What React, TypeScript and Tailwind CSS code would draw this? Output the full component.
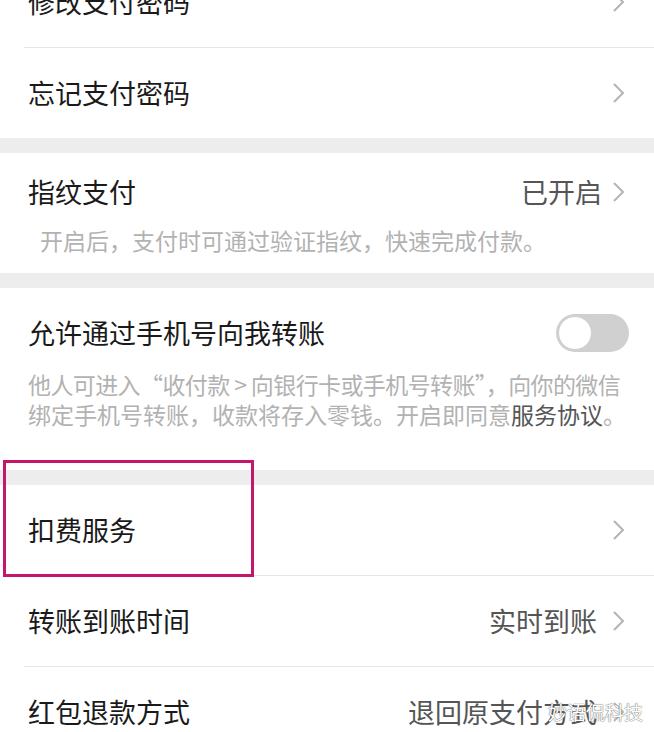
import * as React from 'react';

const font = "font-['Noto_Sans_CJK_SC','Noto_Sans',sans-serif]";

const Chevron: React.FC = () => (
  <svg width="13" height="22" viewBox="0 0 13 22" className="shrink-0">
    <polyline points="2,2 11,11 2,20" fill="none" stroke="#b4b4b4" strokeWidth="2" />
  </svg>
);

type RowProps = { title: string; value?: string; divider?: boolean; className?: string };

const Row: React.FC<RowProps> = ({ title, value, divider, className = '' }) => (
  <div className={`bg-white ${className}`}>
    <div className="flex h-[90px] items-center pl-[28px] pr-[29px]">
      <span className="flex-1 text-[27px] text-[#1a1a1a]">{title}</span>
      {value && <span className="mr-[15px] text-[27px] text-[#555]">{value}</span>}
      <Chevron />
    </div>
    {divider && <div className="ml-[24px] h-px bg-[#e6e6e6]" />}
  </div>
);

const Gap: React.FC = () => <div className="h-[15px] bg-[#ededed]" />;

export default function App() {
  return (
    <div className={`relative h-[732px] w-[654px] overflow-hidden bg-white ${font}`}>
      <Row title="修改支付密码" divider className="mt-[-43px]" />
      <Row title="忘记支付密码" />
      <Gap />

      {/* fingerprint */}
      <div className="bg-white pt-[21px] pb-[18px] pl-[28px] pr-[29px]">
        <div className="flex h-[36px] items-center">
          <span className="flex-1 text-[27px] text-[#1a1a1a]">指纹支付</span>
          <span className="mr-[10px] text-[27px] text-[#555]">已开启</span>
          <Chevron />
        </div>
        <p className="mt-[15px] pl-[12px] text-[23px] leading-[30px] text-[#b2b2b2]">
          开启后，支付时可通过验证指纹，快速完成付款。
        </p>
      </div>
      <Gap />

      {/* phone transfer */}
      <div className="bg-white pt-[27px] pb-[41px] pl-[28px] pr-[25px]">
        <div className="flex h-[36px] items-center">
          <span className="flex-1 text-[27px] text-[#1a1a1a]">允许通过手机号向我转账</span>
          <div className="relative h-[38px] w-[73px] rounded-full bg-[#d0d0d0]">
            <div className="absolute top-[2px] left-[2px] h-[34px] w-[34px] rounded-full border border-[#cfcfcf] bg-white" />
          </div>
        </div>
        <div className="mt-[18px] text-[23px] leading-[30px] whitespace-nowrap text-[#b2b2b2]">
          <p className="tracking-[-0.6px]">他人可进入“收付款 &gt; 向银行卡或手机号转账”，向你的微信</p>
          <p>
            绑定手机号转账，收款将存入零钱。开启即同意<span className="text-[#555]">服务协议</span>。
          </p>
        </div>
      </div>
      <Gap />

      <Row title="扣费服务" divider />
      <Row title="转账到账时间" value="实时到账" divider />
      <Row title="红包退款方式" value="退回原支付方式" />

      {/* highlight box */}
      <div className="absolute top-[460px] left-[3px] h-[117px] w-[251px] border-[3px] border-[#c4176c]" />

      {/* watermark */}
      <div className="absolute top-[700px] left-[548px] text-[19px] leading-[24px] text-white [text-shadow:0_0_1px_#666,0_0_1px_#666]">
        妙语侃科技
      </div>
    </div>
  );
}
